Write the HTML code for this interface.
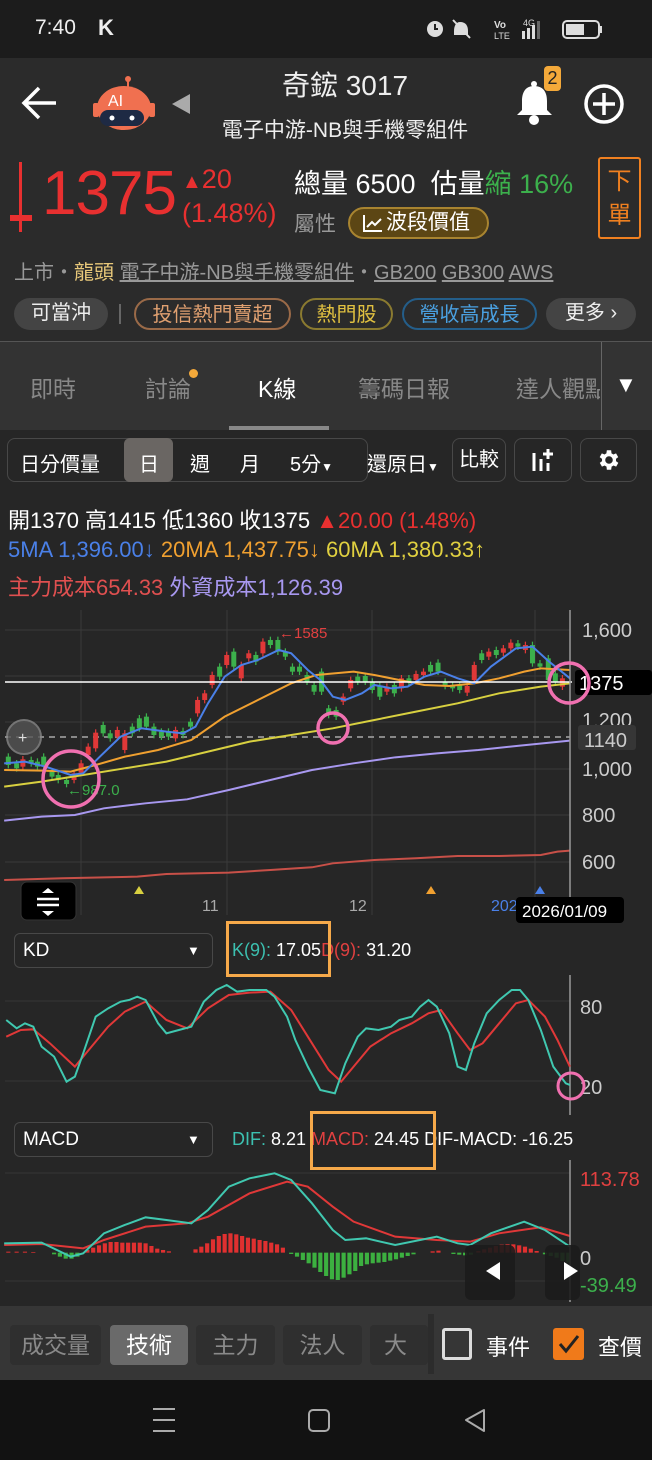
<!DOCTYPE html>
<html><head><meta charset="utf-8"><style>
*{margin:0;padding:0;box-sizing:border-box}
body{width:652px;height:1460px;background:#2b2b2b;position:relative;overflow:hidden;font-family:"Liberation Sans","Noto Sans CJK TC",sans-serif;color:#fff}
.a{position:absolute;white-space:nowrap}
.chip{position:absolute;height:32px;border-radius:16px;font-size:20px;line-height:30px;text-align:center}
.tab{position:absolute;top:1325px;height:40px;border-radius:4px;background:#2f2f2f;color:#8a8a8a;font-size:23px;line-height:40px;text-align:center}
</style></head><body>
<div class="a" style="left:0;top:0;width:652px;height:58px;background:#1c1c1c"></div>
<div class="a" style="left:35px;top:16px;font-size:21px;color:#eee">7:40</div>
<div class="a" style="left:98px;top:15px;font-size:22px;font-weight:bold;color:#eee">K</div>
<svg class="a" style="left:420px;top:14px" width="190" height="30">
<circle cx="15" cy="15" r="8" fill="#ddd"/><path d="M15 10v5h3" stroke="#222" stroke-width="2" fill="none"/>
<path d="M40 8c6 0 8 4 8 9v4h-14v-4c0-5 2-9 6-9z" fill="#ddd"/><line x1="33" y1="6" x2="50" y2="24" stroke="#ddd" stroke-width="2"/>
<text x="74" y="14" font-size="10" fill="#ddd" font-weight="bold">Vo</text><text x="74" y="25" font-size="9" fill="#ddd">LTE</text>
<text x="103" y="12" font-size="9" fill="#ddd">4G</text><rect x="102" y="17" width="3" height="8" fill="#ddd"/><rect x="107" y="14" width="3" height="11" fill="#ddd"/><rect x="112" y="11" width="3" height="14" fill="#ddd"/><rect x="117" y="7" width="3" height="18" fill="#666"/>
<rect x="143" y="7" width="36" height="17" rx="4" fill="none" stroke="#ddd" stroke-width="2"/><rect x="146" y="10" width="18" height="11" fill="#ddd"/><rect x="180" y="12" width="2" height="7" fill="#ddd"/>
</svg>
<svg class="a" style="left:20px;top:84px" width="42" height="40"><path d="M36 19H4M19 4L4 19l15 15" stroke="#fff" stroke-width="3.5" fill="none"/></svg>
<svg class="a" style="left:90px;top:75px" width="70" height="55">
<line x1="38" y1="4" x2="38" y2="14" stroke="#f07050" stroke-width="2"/><circle cx="38" cy="4" r="3" fill="#f07050"/>
<rect x="3" y="28" width="6" height="14" rx="2" fill="#f07050"/><rect x="59" y="28" width="6" height="14" rx="2" fill="#f07050"/>
<ellipse cx="34" cy="33" rx="27" ry="22" fill="#f07050"/><rect x="10" y="35" width="44" height="16" rx="8" fill="#1e2a44"/>
<circle cx="22" cy="43" r="2.5" fill="#fff"/><circle cx="42" cy="43" r="2.5" fill="#fff"/>
<text x="18" y="31" font-size="16" fill="#fff" font-family="Liberation Sans">AI</text></svg>
<svg class="a" style="left:170px;top:92px" width="22" height="24"><path d="M20 2v20L2 12z" fill="#aaa"/></svg>
<div class="a" style="left:0;width:690px;text-align:center;top:64px;font-size:28px;color:#eee">奇鋐 3017</div>
<div class="a" style="left:0;width:690px;text-align:center;top:114px;font-size:21px;color:#eee">電子中游-NB與手機零組件</div>
<svg class="a" style="left:512px;top:80px" width="48" height="46"><path d="M22 6c-9 0-12 7-12 15v9l-5 5h35l-5-5v-9c0-8-3-15-13-15z" fill="#fff"/><circle cx="22" cy="40" r="5" fill="#fff"/><rect x="19" y="1" width="6" height="6" rx="3" fill="#fff"/></svg>
<div class="a" style="left:544px;top:66px;width:17px;height:25px;background:#f4a93a;border-radius:4px;color:#222;font-size:18px;text-align:center;line-height:25px">2</div>
<svg class="a" style="left:583px;top:83px" width="42" height="42"><circle cx="21" cy="21" r="18" stroke="#fff" stroke-width="3.5" fill="none"/><path d="M21 10v22M10 21h22" stroke="#fff" stroke-width="3.5"/></svg>
<div class="a" style="left:19px;top:162px;width:3px;height:70px;background:#e83030"></div>
<div class="a" style="left:10px;top:215px;width:22px;height:6px;background:#e83030"></div>
<div class="a" style="left:42px;top:158px;font-size:62px;color:#e83030;letter-spacing:-1px">1375</div>
<div class="a" style="left:182px;top:164px;font-size:27px;color:#e83030"><span style="font-size:20px">▲</span>20</div>
<div class="a" style="left:182px;top:198px;font-size:27px;color:#e83030">(1.48%)</div>
<div class="a" style="left:294px;top:162px;font-size:27px;color:#fff">總量 6500&nbsp;&nbsp;估量<span style="color:#3cb04c">縮 16%</span></div>
<div class="a" style="left:294px;top:208px;font-size:21px;color:#999">屬性</div>
<div class="a" style="left:348px;top:207px;width:141px;height:32px;border-radius:16px;background:#5c4614;border:2px solid #a88430;font-size:21px;line-height:28px;padding-left:36px;color:#fff">波段價值</div>
<svg class="a" style="left:362px;top:213px" width="22" height="20"><path d="M2 2v16h18M5 14l5-5 3 3 6-6" stroke="#fff" stroke-width="2" fill="none"/></svg>
<div class="a" style="left:598px;top:157px;width:43px;height:82px;border:2px solid #f08020;border-radius:3px;color:#f08020;font-size:24px;line-height:34px;text-align:center;padding-top:6px">下<br>單</div>
<div class="a" style="left:14px;top:256px;font-size:20px;color:#999">上市・<span style="color:#e8c87a">龍頭</span> <u>電子中游-NB與手機零組件</u>・<u>GB200</u> <u>GB300</u> <u>AWS</u></div>
<div class="chip" style="left:14px;top:298px;width:94px;background:#444;color:#eee">可當沖</div>
<div class="a" style="left:119px;top:304px;width:2px;height:20px;background:#666"></div>
<div class="chip" style="left:134px;top:298px;width:157px;border:2px solid #9a6a48;color:#e0a070">投信熱門賣超</div>
<div class="chip" style="left:300px;top:298px;width:93px;border:2px solid #8a7a30;color:#e0c040">熱門股</div>
<div class="chip" style="left:402px;top:298px;width:135px;border:2px solid #245e8a;color:#4aa0e0">營收高成長</div>
<div class="chip" style="left:546px;top:298px;width:90px;background:#444;color:#eee">更多 ›</div>
<div class="a" style="left:0;top:341px;width:652px;height:89px;background:#333;border-top:1px solid #555"></div>
<div class="a" style="left:30px;top:370px;font-size:23px;color:#888">即時</div>
<div class="a" style="left:145px;top:370px;font-size:23px;color:#888">討論</div>
<div class="a" style="left:189px;top:369px;width:9px;height:9px;border-radius:50%;background:#f4a93a"></div>
<div class="a" style="left:258px;top:370px;font-size:23px;color:#fff">K線</div>
<div class="a" style="left:358px;top:370px;font-size:23px;color:#888">籌碼日報</div>
<div class="a" style="left:516px;top:370px;font-size:23px;color:#888;width:84px;overflow:hidden">達人觀點</div>
<div class="a" style="left:601px;top:342px;width:1px;height:88px;background:#666"></div>
<div class="a" style="left:615px;top:372px;font-size:22px;color:#fff">▼</div>
<div class="a" style="left:229px;top:426px;width:100px;height:4px;background:#888"></div>
<div class="a" style="left:0;top:430px;width:652px;height:876px;background:#262626"></div>
<div class="a" style="left:7px;top:438px;width:361px;height:44px;border:1px solid #484848;border-radius:8px"></div>
<div class="a" style="left:124px;top:438px;width:49px;height:44px;background:#6a6663;border-radius:6px"></div>
<div class="a" style="left:20px;top:448px;font-size:20px;color:#fff">日分價量</div>
<div class="a" style="left:139px;top:448px;font-size:20px;color:#fff">日</div>
<div class="a" style="left:190px;top:448px;font-size:20px;color:#fff">週</div>
<div class="a" style="left:240px;top:448px;font-size:20px;color:#fff">月</div>
<div class="a" style="left:290px;top:448px;font-size:20px;color:#fff">5分<span style="font-size:12px">▼</span></div>
<div class="a" style="left:367px;top:448px;font-size:20px;color:#fff">還原日<span style="font-size:12px">▼</span></div>
<div class="a" style="left:452px;top:438px;width:54px;height:44px;border:1px solid #484848;border-radius:8px;font-size:20px;line-height:42px;color:#fff;text-align:center">比較</div>
<div class="a" style="left:514px;top:438px;width:58px;height:44px;border:1px solid #484848;border-radius:8px"></div>
<svg class="a" style="left:530px;top:447px" width="30" height="26"><path d="M4 6v18M11 12v12M18 16v8M18 2v10M13 7h10" stroke="#fff" stroke-width="3"/></svg>
<div class="a" style="left:580px;top:438px;width:57px;height:44px;border:1px solid #484848;border-radius:8px"></div>
<svg class="a" style="left:596px;top:447px" width="26" height="26" viewBox="0 0 24 24"><path fill="#fff" d="M19.4 13a7.5 7.5 0 000-2l2.1-1.6-2-3.5-2.5 1a7 7 0 00-1.7-1L15 3h-4l-.4 2.9a7 7 0 00-1.7 1l-2.5-1-2 3.5L6.6 11a7.5 7.5 0 000 2l-2.1 1.6 2 3.5 2.5-1a7 7 0 001.7 1L11 21h4l.4-2.9a7 7 0 001.7-1l2.5 1 2-3.5zM13 15.5a3.5 3.5 0 110-7 3.5 3.5 0 010 7z" transform="translate(-1 0)"/></svg>
<div class="a" style="left:8px;top:503px;font-size:22px;color:#fff">開1370 高1415 低1360 收1375 <span style="color:#e83030">▲20.00 (1.48%)</span></div>
<div class="a" style="left:8px;top:537px;font-size:22px"><span style="color:#4a80e8">5MA 1,396.00↓</span> <span style="color:#f0a030">20MA 1,437.75↓</span> <span style="color:#e0d040">60MA 1,380.33↑</span></div>
<div class="a" style="left:8px;top:570px;font-size:22px"><span style="color:#e05050">主力成本654.33</span> <span style="color:#a898f0">外資成本1,126.39</span></div>
<svg class="a" style="left:0;top:600px" width="652" height="330">
<g stroke="#3a3a3a" stroke-width="1">
<line x1="5" y1="30" x2="570" y2="30"/><line x1="5" y1="76" x2="570" y2="76"/><line x1="5" y1="122" x2="570" y2="122"/><line x1="5" y1="169" x2="570" y2="169"/><line x1="5" y1="215" x2="570" y2="215"/><line x1="5" y1="262" x2="570" y2="262"/>
<line x1="81" y1="10" x2="81" y2="315"/><line x1="227" y1="10" x2="227" y2="315"/><line x1="372" y1="10" x2="372" y2="315"/><line x1="535" y1="10" x2="535" y2="315"/>
</g>
<line x1="5" y1="137" x2="570" y2="137" stroke="#888" stroke-width="2" stroke-dasharray="6 5"/>
<g transform="scale(0.416,0.3333)" id="cd"></g>
<g transform="scale(0.416,0.3333)" fill="none" stroke-width="2">
<polyline vector-effect="non-scaling-stroke" stroke="#c85048" points="10,840 150,835 330,830 400,822 550,818 650,810 750,802 800,790 900,780 1000,775 1100,768 1200,768 1300,765 1340,755 1370,752"/>
<polyline vector-effect="non-scaling-stroke" stroke="#a898f0" points="10,662 100,650 180,645 250,625 350,610 450,598 550,570 650,540 750,510 850,490 950,472 1050,460 1150,450 1250,437 1370,422"/>
<polyline vector-effect="non-scaling-stroke" stroke="#d8d040" points="10,560 100,545 200,525 300,505 400,485 500,455 600,425 700,405 800,385 900,360 1000,335 1100,310 1200,280 1300,260 1370,250"/>
<polyline vector-effect="non-scaling-stroke" stroke="#f0a030" points="10,510 100,512 170,515 230,495 300,470 380,450 460,420 540,350 620,300 700,250 760,225 850,215 900,225 960,240 1020,255 1080,258 1140,250 1200,235 1260,215 1300,205 1370,210"/>
<polyline vector-effect="non-scaling-stroke" stroke="#4a80e8" points="10,490 60,485 110,500 170,525 200,520 240,470 290,410 340,385 400,395 440,400 470,380 500,310 540,230 580,195 620,180 670,150 700,160 740,210 770,240 800,290 830,300 870,280 900,255 940,265 980,260 1020,230 1060,215 1100,235 1140,250 1180,200 1240,145 1280,140 1320,185 1370,235"/>
</g>
<line x1="5" y1="82" x2="572" y2="82" stroke="#fff" stroke-width="1.5"/>
<line x1="570" y1="10" x2="570" y2="318" stroke="#999" stroke-width="1.5"/>
<g font-size="20" fill="#ccc" font-family="Liberation Sans"><text x="582" y="37">1,600</text><text x="582" y="127">1,200</text><text x="582" y="176">1,000</text><text x="582" y="222">800</text><text x="582" y="269">600</text></g>
<rect x="575" y="70" width="77" height="25" rx="3" fill="#000"/><text x="579" y="90" font-size="20" fill="#fff" font-family="Liberation Sans">1375</text>
<rect x="578" y="125" width="58" height="25" rx="3" fill="#363636"/><text x="584" y="147" font-size="20" fill="#ccc" font-family="Liberation Sans">1140</text>
<text x="279" y="38" font-size="15" fill="#e04040" font-family="Liberation Sans">←1585</text>
<text x="67" y="195" font-size="15" fill="#3cb04c" font-family="Liberation Sans">←987.0</text>
<circle cx="24" cy="137" r="17" fill="#555" stroke="#888" stroke-width="2" opacity="0.8"/><text x="18" y="143" font-size="16" fill="#ddd">+</text>
<g fill="none" stroke="#f070b0" stroke-width="3.5"><circle cx="71" cy="179" r="28"/><circle cx="333" cy="128" r="15"/><circle cx="569" cy="83" r="20"/></g>
<path d="M134 294l5-8 5 8z" fill="#d8d040"/><path d="M426 294l5-8 5 8z" fill="#f0a030"/><path d="M535 294l5-8 5 8z" fill="#4a80e8"/>
<g font-size="16" font-family="Liberation Sans"><text x="202" y="311" fill="#aaa">11</text><text x="349" y="311" fill="#aaa">12</text><text x="491" y="311" fill="#4a80e8">202</text><text x="56" y="311" fill="#888">10</text></g>
<rect x="516" y="297" width="108" height="26" rx="4" fill="#000"/><text x="522" y="317" font-size="17" fill="#fff" font-family="Liberation Sans">2026/01/09</text>
<rect x="21" y="282" width="55" height="38" rx="6" fill="#000" stroke="#333"/>
<path d="M42 293l6-5 6 5zM42 311l6 5 6-5z" fill="#fff"/><path d="M37 299h22M37 305h22" stroke="#fff" stroke-width="2.5"/>
</svg>
<div class="a" style="left:14px;top:933px;width:199px;height:35px;border:1px solid #484848;border-radius:6px;font-size:19px;line-height:33px;padding-left:8px;color:#fff">KD<span style="position:absolute;left:172px;font-size:13px">▼</span></div>
<div class="a" style="left:232px;top:940px;font-size:18px;color:#fff"><span style="color:#3cc0b0">K(9):</span> 17.05<span style="color:#e04040">D(9):</span> 31.20</div>
<div class="a" style="left:226px;top:921px;width:105px;height:56px;border:3px solid #f5a94a"></div>
<svg class="a" style="left:0;top:920px" width="652" height="200">
<line x1="5" y1="81" x2="570" y2="81" stroke="#363636"/><line x1="5" y1="161" x2="570" y2="161" stroke="#363636"/>
<line x1="570" y1="55" x2="570" y2="195" stroke="#999" stroke-width="1.5"/>
<text x="580" y="94" font-size="20" fill="#ccc" font-family="Liberation Sans">80</text><text x="580" y="174" font-size="20" fill="#ccc" font-family="Liberation Sans">20</text>
<g transform="scale(0.416,0.3333)" fill="none">
<polyline vector-effect="non-scaling-stroke" stroke-width="2" stroke="#e03838" points="15,350 50,330 80,328 120,370 180,440 220,380 260,320 300,275 350,245 400,300 450,325 500,265 550,225 600,218 650,215 700,270 750,370 790,450 820,485 850,440 890,380 940,340 990,310 1030,280 1060,270 1100,340 1130,390 1160,370 1200,310 1240,250 1270,240 1310,290 1340,360 1370,440"/>
<polyline vector-effect="non-scaling-stroke" stroke-width="2" stroke="#40c8b0" points="15,300 40,325 60,310 80,320 100,380 130,410 160,485 180,470 200,400 230,290 260,265 290,245 310,240 330,230 350,240 380,310 400,340 430,330 460,320 490,245 520,210 545,195 570,215 600,210 640,210 660,230 690,290 710,360 740,440 770,510 805,520 830,430 860,350 880,325 910,330 940,320 960,300 990,290 1010,260 1030,240 1050,260 1080,340 1100,440 1120,450 1140,370 1170,280 1200,240 1230,210 1250,210 1270,240 1300,330 1330,440 1360,490 1370,495"/>
</g>
<circle cx="571" cy="166" r="13" fill="none" stroke="#f070b0" stroke-width="3"/>
</svg>
<div class="a" style="left:14px;top:1122px;width:199px;height:35px;border:1px solid #484848;border-radius:6px;font-size:19px;line-height:33px;padding-left:8px;color:#fff">MACD<span style="position:absolute;left:172px;font-size:13px">▼</span></div>
<div class="a" style="left:232px;top:1129px;font-size:18px;color:#fff"><span style="color:#3cc0b0">DIF:</span> 8.21 <span style="color:#e04040">MACD:</span> 24.45 DIF-MACD: -16.25</div>
<div class="a" style="left:310px;top:1111px;width:126px;height:59px;border:3px solid #f5a94a"></div>
<svg class="a" style="left:0;top:1110px" width="652" height="196">
<line x1="5" y1="63" x2="570" y2="63" stroke="#363636"/><line x1="5" y1="171" x2="570" y2="171" stroke="#363636"/>
<g transform="scale(0.416,0.3333)" id="hist"></g>
<g transform="scale(0.416,0.3333)" fill="none">
<polyline vector-effect="non-scaling-stroke" stroke-width="2" stroke="#e03838" points="10,405 100,402 200,415 250,390 350,350 450,340 500,320 600,250 690,215 740,230 800,290 850,335 950,380 1050,390 1130,395 1200,370 1300,352 1370,378"/>
<polyline vector-effect="non-scaling-stroke" stroke-width="2" stroke="#40c8b0" points="10,400 100,398 170,440 200,430 250,370 300,345 350,322 400,330 460,340 500,300 550,230 600,205 660,190 700,210 750,280 800,360 830,390 880,385 950,405 1050,380 1100,400 1130,405 1180,370 1260,335 1310,360 1370,410"/>
</g>
<line x1="570" y1="50" x2="570" y2="192" stroke="#999" stroke-width="1.5"/>
<rect x="465" y="135" width="50" height="55" rx="6" fill="#1c1c1c" opacity="0.9"/><rect x="545" y="135" width="35" height="55" rx="6" fill="#1c1c1c" opacity="0.9"/>
<path d="M500 152v18l-14-9z" fill="#fff"/><path d="M564 152v18l14-9z" fill="#fff"/>
<text x="580" y="76" font-size="20" fill="#e04040" font-family="Liberation Sans">113.78</text>
<text x="580" y="155" font-size="20" fill="#ccc" font-family="Liberation Sans">0</text>
<text x="580" y="182" font-size="20" fill="#3cb04c" font-family="Liberation Sans">-39.49</text>
</svg>
<div class="a" style="left:0;top:1306px;width:652px;height:74px;background:#363636"></div>
<div class="tab" style="left:10px;width:91px">成交量</div>
<div class="tab" style="left:110px;width:78px;background:#6a6a6a;color:#fff">技術</div>
<div class="tab" style="left:196px;width:79px">主力</div>
<div class="tab" style="left:283px;width:79px">法人</div>
<div class="tab" style="left:370px;width:58px;overflow:hidden;text-align:left;padding-left:14px">大戶</div>
<div class="a" style="left:428px;top:1314px;width:6px;height:60px;background:#2c2c2c"></div>
<div class="a" style="left:442px;top:1328px;width:30px;height:32px;border:3px solid #ddd;border-radius:3px"></div>
<div class="a" style="left:486px;top:1330px;font-size:22px;color:#fff">事件</div>
<div class="a" style="left:553px;top:1328px;width:31px;height:32px;background:#f07a1a;border-radius:3px"></div>
<svg class="a" style="left:555px;top:1330px" width="28" height="28"><path d="M5 14l6 7L23 6" stroke="#222" stroke-width="3" fill="none"/></svg>
<div class="a" style="left:598px;top:1330px;font-size:22px;color:#fff">查價</div>
<div class="a" style="left:0;top:1380px;width:652px;height:80px;background:#121212"></div>
<svg class="a" style="left:150px;top:1405px" width="350" height="32">
<path d="M3 4h22M3 15h22M3 26h22" stroke="#aaa" stroke-width="2"/>
<rect x="159" y="5" width="20" height="21" rx="4" stroke="#aaa" stroke-width="2" fill="none"/>
<path d="M334 5L316 15l18 11z" stroke="#aaa" stroke-width="2" fill="none" stroke-linejoin="round"/>
</svg>
<script>
(function(){
var C=[[20,470,495,'g'],[40,490,505,'g'],[55,478,500,'r'],[75,480,490,'g'],[90,485,500,'g'],[105,470,495,'g'],[125,515,530,'g'],[140,525,540,'g'],[160,540,552,'g'],[178,520,540,'r'],[195,490,518,'r'],[212,440,465,'r'],[230,398,445,'r'],[248,375,400,'g'],[265,400,415,'g'],[282,390,410,'r'],[300,400,450,'r'],[318,380,400,'g'],[335,355,385,'g'],[352,350,380,'g'],[370,380,405,'g'],[388,395,410,'g'],[405,395,410,'g'],[422,390,415,'r'],[440,393,405,'g'],[458,365,380,'g'],[475,300,340,'r'],[492,280,300,'r'],[510,225,255,'r'],[528,200,230,'g'],[545,165,195,'r'],[562,155,200,'g'],[580,195,235,'r'],[598,160,175,'r'],[615,165,185,'g'],[632,125,160,'r'],[650,120,135,'g'],[668,120,155,'g'],[686,155,170,'g'],[703,200,215,'g'],[720,200,215,'g'],[738,225,245,'g'],[755,255,275,'g'],[773,215,275,'g'],[790,325,345,'g'],[808,330,350,'g'],[825,290,305,'r'],[843,240,265,'r'],[860,230,245,'g'],[878,228,245,'g'],[895,245,270,'g'],[913,258,290,'g'],[930,260,275,'r'],[948,255,280,'g'],[965,235,265,'r'],[983,235,245,'g'],[1000,222,240,'r'],[1018,215,225,'r'],[1035,195,215,'g'],[1053,188,215,'g'],[1070,245,258,'g'],[1088,255,265,'g'],[1105,255,270,'g'],[1123,258,278,'r'],[1140,195,240,'r'],[1158,160,180,'g'],[1175,155,170,'r'],[1193,150,165,'g'],[1210,145,158,'r'],[1228,128,145,'r'],[1245,130,140,'g'],[1263,135,150,'r'],[1280,135,190,'g'],[1298,190,200,'g'],[1318,175,240,'g'],[1335,220,245,'g'],[1352,235,260,'r']];
var s='';C.forEach(function(c){var col=c[3]=='g'?'#3cb04c':'#e03838';s+='<line x1="'+c[0]+'" x2="'+c[0]+'" y1="'+(c[1]-10)+'" y2="'+(c[2]+10)+'" stroke="'+col+'" stroke-width="3"/><rect x="'+(c[0]-6)+'" y="'+c[1]+'" width="12" height="'+(c[2]-c[1])+'" fill="'+col+'"/>';});
document.getElementById('cd').innerHTML=s;
var R=[[210,8],[224,15],[238,22],[252,28],[266,32],[280,32],[294,30],[308,30],[322,30],[336,30],[350,28],[364,20],[378,12],[392,8],[406,4],[470,10],[484,18],[498,28],[512,40],[526,50],[540,56],[554,58],[568,55],[582,50],[596,45],[610,42],[624,38],[638,35],[652,30],[666,25],[680,15],[1150,5],[1164,10],[1178,15],[1192,20],[1206,24],[1220,25],[1234,25],[1248,22],[1262,18],[1276,12],[1290,5],[20,3],[40,3],[60,3],[80,2],[1040,4],[1054,6]];
var G=[[130,5],[144,12],[158,18],[172,18],[186,12],[700,4],[714,12],[728,22],[742,32],[756,45],[770,58],[784,70],[798,80],[812,82],[826,75],[840,65],[854,55],[868,40],[882,35],[896,32],[910,30],[924,28],[938,24],[952,20],[966,15],[980,10],[994,5],[1090,4],[1104,6],[1118,8],[1132,6],[1310,5],[1324,10],[1338,15],[1352,25],[1366,30]];
var h='';R.forEach(function(b){h+='<rect x="'+(b[0]-5)+'" y="'+(428-b[1])+'" width="10" height="'+b[1]+'" fill="#e03030"/>';});
G.forEach(function(b){h+='<rect x="'+(b[0]-5)+'" y="428" width="10" height="'+b[1]+'" fill="#3cb040"/>';});
document.getElementById('hist').innerHTML=h;
})();
</script>
</body></html>
